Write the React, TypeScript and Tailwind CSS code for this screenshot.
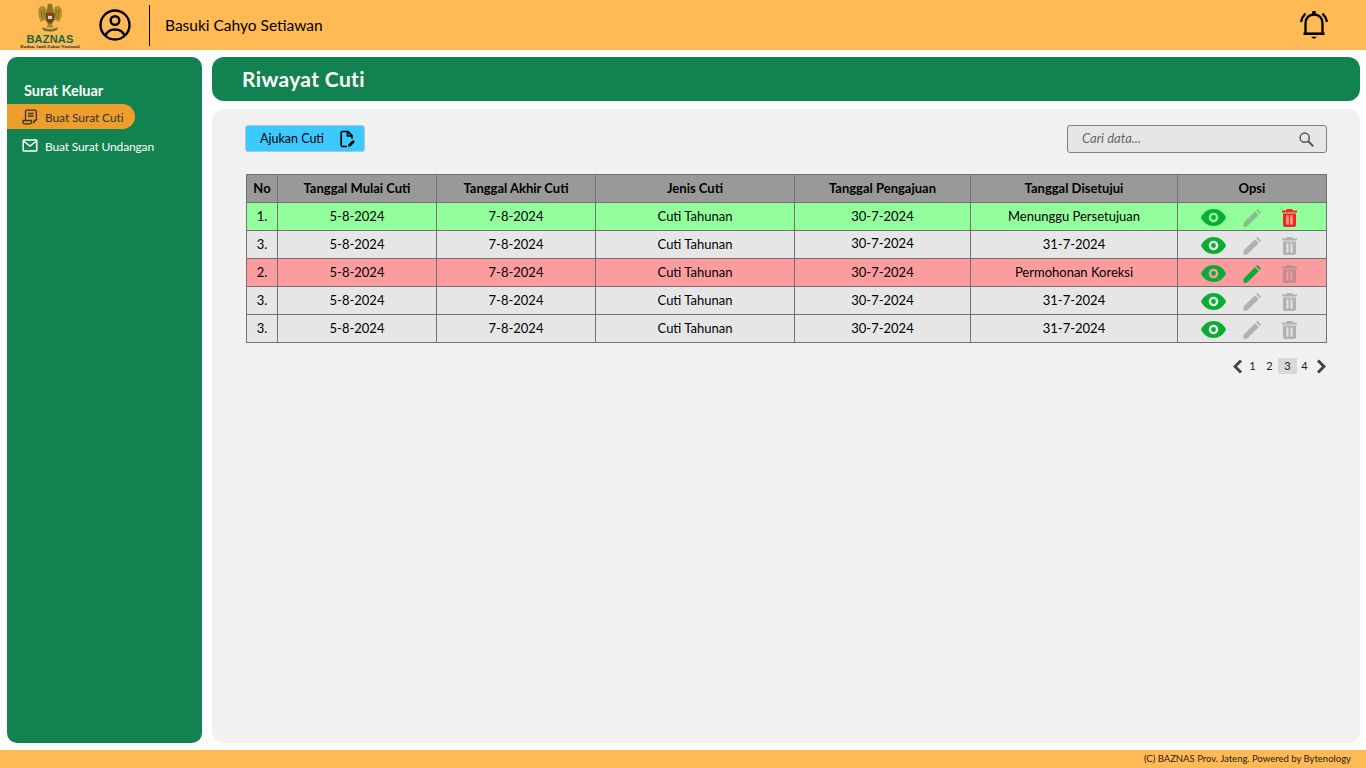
const rows = [
  { no: '1.', tgl: '30-7-2024', status: 'Menunggu Persetujuan', bg: 'bg-[#92ff9c]', eye: 'text-[#92ff9c]', edit: false, del: true },
  { no: '3.', tgl: '30-7-2024', status: '31-7-2024', bg: 'bg-[#e6e6e6]', eye: 'text-[#e6e6e6]', edit: false, del: false },
  { no: '2.', tgl: '30-7-2024', status: 'Permohonan Koreksi', bg: 'bg-[#fb9d9f]', eye: 'text-[#fb9d9f]', edit: true, del: false },
  { no: '3.', tgl: '30-7-2024', status: '31-7-2024', bg: 'bg-[#e6e6e6]', eye: 'text-[#e6e6e6]', edit: false, del: false },
  { no: '3.', tgl: '30-7-2024', status: '31-7-2024', bg: 'bg-[#e6e6e6]', eye: 'text-[#e6e6e6]', edit: false, del: false },
]

const headers = ['No', 'Tanggal Mulai Cuti', 'Tanggal Akhir Cuti', 'Jenis Cuti', 'Tanggal Pengajuan', 'Tanggal Disetujui', 'Opsi']

function Logo() {
  return (
    <div className="w-[62px] flex flex-col items-center">
      <svg viewBox="0 0 26 30" className="w-[26px] h-[30px] mt-[2px]">
        {/* wings */}
        <path d="M9 5C6 2 3 2.500 1.500 6 .5 10 1.500 15 4 19l4.500-2.500z" fill="#b0902c" />
        <path d="M17 5c3-3 6-2.500 7.500 1 1 4 0 9-2.500 13l-4.500-2.500z" fill="#b0902c" />
        <path d="M4 7c0 3 .5 6 2 9M7 6c-.5 3 0 6 1 8M22 7c0 3-.5 6-2 9M19 6c.5 3 0 6-1 8" stroke="#6e5a1c" strokeWidth="0.800" fill="none" />
        {/* head and body */}
        <path d="M13 .5c-1.800 0-3 1.500-2.500 3.500L9 9v9l2 3h4l2-3V9l-1.500-5C16 2 14.800 .5 13 .5z" fill="#8f7420" />
        {/* shield */}
        <path d="M8.500 10h9v7l-4.500 3.500L8.500 17z" fill="#6b4a22" />
        <rect x="11" y="11" width="4" height="5" fill="#d8d2c0" />
        <rect x="11" y="11" width="4" height="2" fill="#b53226" />
        {/* tail and banner */}
        <path d="M11 21h4l1.500 3.500h-7z" fill="#a8882a" />
        <path d="M5 24c3 1.500 5 2 8 2s5-.5 8-2l-1 3c-2 1-4.500 1.500-7 1.500S8 28 6 27z" fill="#7d6d2e" />
      </svg>
      <span className="mt-[1px] text-[11px] leading-[10px] font-black tracking-[0.2px] text-[#14693f] font-['Liberation_Sans',sans-serif]">BAZNAS</span>
      <span className="text-[5px] leading-[6px] font-bold whitespace-nowrap text-[#333] font-['Liberation_Serif',serif]">Badan Amil Zakat Nasional</span>
    </div>
  )
}

function UserIcon() {
  return (
    <svg viewBox="0 0 32 32" className="w-[32px] h-[32px]" fill="none" stroke="black" strokeWidth="2.400">
      <circle cx="16" cy="16" r="14.500" />
      <circle cx="16" cy="11.500" r="4.300" />
      <path d="M6.500 26.500c1.500-4 5-6 9.500-6s8 2 9.500 6" />
    </svg>
  )
}

function BellIcon() {
  return (
    <svg viewBox="0 0 28 28" className="w-[28px] h-[28px]" fill="none" stroke="black" strokeWidth="2.300">
      <path d="M5.500 22V12C5.500 7 9 3.500 14 3.500S22.500 7 22.500 12V22" />
      <path d="M3.500 22.700h21" strokeWidth="2.600" />
      <path d="M14 0v4" strokeWidth="3.500" />
      <path d="M11 25.700h6L14 28z" fill="black" stroke="none" />
      <path d="M5.500 2.500C3 5 1.500 8 1 11" />
      <path d="M22.500 2.500C25 5 26.500 8 27 11" />
    </svg>
  )
}

function CutiIcon() {
  return (
    <svg viewBox="0 0 16 16" className="w-[16px] h-[16px] text-[#333]" fill="none" stroke="currentColor" strokeWidth="1.300">
      <path d="M3.500 11V2.500C3.500 1.700 4 1.200 4.800 1.200h8.200c.8 0 1.300.5 1.300 1.300V9" />
      <path d="M6 4.500h5.500M6 7h5.500" />
      <path d="M1 11.500h8.500v1.500c0 1-.6 1.800-1.500 1.800H2.500C1.600 14.800 1 14 1 13z" />
      <path d="M10.500 14.500l.5-2 3.500-3.500 1.200 1.200-3.500 3.500z" fill="currentColor" stroke="none" />
    </svg>
  )
}

function MailIcon() {
  return (
    <svg viewBox="0 0 16 13" className="w-[16px] h-[13px]" fill="none" stroke="white" strokeWidth="1.500">
      <rect x="1.200" y="1" width="13.600" height="11" rx="0.800" />
      <path d="M1.500 2l6.500 5 6.500-5" />
    </svg>
  )
}

function AjukanIcon() {
  return (
    <svg viewBox="0 0 18 18" className="w-[18px] h-[18px]" fill="none" stroke="black" strokeWidth="1.700">
      <path d="M9 16.500H4.500c-.8 0-1.300-.5-1.300-1.300V2.800c0-.8.5-1.300 1.300-1.300h5.500l4 4.200v3" strokeLinejoin="round" />
      <path d="M9.500 1.500v4.500h4.500" />
      <path d="M10 16.800l.6-2.500 4.400-4.400 2 2-4.400 4.400z" fill="black" stroke="none" />
    </svg>
  )
}

function SearchIcon() {
  return (
    <svg viewBox="0 0 15 15" className="w-[15px] h-[15px]" fill="none" stroke="#555">
      <circle cx="5.700" cy="5.700" r="4.600" strokeWidth="1.500" />
      <path d="M9 9l5.200 5.200" strokeWidth="2" />
    </svg>
  )
}

function EyeIcon() {
  return (
    <svg viewBox="0 0 25 17" className="w-[25px] h-[17px]">
      <path d="M0 8.500C2.500 3.200 7 0 12.500 0S22.500 3.200 25 8.500C22.500 13.800 18 17 12.500 17S2.500 13.800 0 8.500z" fill="#08ad36" />
      <circle cx="12.500" cy="8.500" r="3.600" fill="none" stroke="currentColor" strokeWidth="2.400" />
    </svg>
  )
}

function PencilIcon({ active }: { active: boolean }) {
  return (
    <svg viewBox="0 0 18 18" className={active ? 'w-[18px] h-[18px] text-[#08ad36]' : 'w-[18px] h-[18px] text-[#808080] opacity-50'} fill="currentColor">
      <path d="M0.300 17.700l.4-4.200L12 2.200l3.800 3.800L4.500 17.300q-.4.400-1 .4z" />
      <path d="M13 1.200l1-1q.4-.3.800 0l3 3q.3.400 0 .8l-1 1z" />
    </svg>
  )
}

function TrashIcon({ active }: { active: boolean }) {
  return (
    <svg viewBox="0 0 15 18" className={active ? 'w-[15px] h-[18px] text-[#ff1f1f]' : 'w-[15px] h-[18px] text-[#808080] opacity-50'}>
      <path d="M5 0h5l1 1.500h4v2H0v-2h4z" fill="currentColor" />
      <path fillRule="evenodd" d="M1 4.500h13V16c0 1.200-.8 2-2 2H3c-1.200 0-2-.8-2-2zM4.500 6.500v9h2v-9zM8.500 6.500v9h2v-9z" fill="currentColor" />
      {active && <path d="M4.500 6.500h2v9h-2zM8.500 6.500h2v9h-2z" fill="#ff9a8a" />}
    </svg>
  )
}

function PageChevron({ right }: { right?: boolean }) {
  return (
    <svg viewBox="0 0 10 15" className="w-[10px] h-[15px]" fill="none" stroke="#444" strokeWidth="3">
      <path d={right ? 'M2 1.500l6 6-6 6' : 'M8 1.500l-6 6 6 6'} />
    </svg>
  )
}

export default function App() {
  return (
    <div className="w-[1366px] h-[768px] bg-white flex flex-col overflow-hidden text-black font-['Lato',sans-serif]">
      <header className="h-[50px] shrink-0 bg-[#ffb955] flex items-center pl-[19px] pr-[38px]">
        <Logo />
        <div className="ml-[18px]"><UserIcon /></div>
        <div className="ml-[18px] w-px h-[41px] bg-black" />
        <span className="ml-[15px] pt-[2px] text-[15.500px]">Basuki Cahyo Setiawan</span>
        <div className="ml-auto"><BellIcon /></div>
      </header>

      <div className="flex-1 min-h-0 flex gap-[10px] pl-[7px] pr-[6px] pt-[7px] pb-[7px]">
        <aside className="w-[195px] bg-[#118250] rounded-[10px] pt-[25px] text-white">
          <div className="pl-[17px] text-[14.500px] font-bold leading-[17px]">Surat Keluar</div>
          <div className="mt-[5px] w-[128px] h-[25px] bg-[#ee9f2b] rounded-r-full flex items-center pl-[15px] gap-[7px] text-[#333]">
            <CutiIcon />
            <span className="text-[12px] pt-[2px] tracking-[-0.1px]">Buat Surat Cuti</span>
          </div>
          <div className="mt-[4px] h-[25px] flex items-center pl-[15px] gap-[7px]">
            <MailIcon />
            <span className="text-[12px] pt-[2px] tracking-[-0.15px]">Buat Surat Undangan</span>
          </div>
        </aside>

        <main className="flex-1 min-w-0 flex flex-col gap-[8px]">
          <div className="h-[44px] shrink-0 bg-[#118250] rounded-[12px] flex items-center pl-[30px] pb-[1px] text-white text-[21px] font-bold tracking-[0.35px]">
            Riwayat Cuti
          </div>

          <section className="flex-1 min-h-0 bg-[#f1f1f1] rounded-[12px] pt-[16px] pl-[33px] pr-[33px]">
            <div className="flex items-start justify-between">
              <button className="w-[120px] h-[27px] bg-[#3bc9ff] border border-[#a9c9d8] rounded-[3px] flex items-center pl-[14px] text-[12.500px] text-black">
                <span className="pt-[2px]">Ajukan Cuti</span>
                <span className="ml-auto mr-[8px]"><AjukanIcon /></span>
              </button>
              <div className="w-[260px] h-[28px] bg-[#e6e6e6] border border-[#808080] rounded-[3px] flex items-center pl-[14px] pr-[12px]">
                <span className="text-[13px] italic text-[#666]">Cari data...</span>
                <span className="ml-auto"><SearchIcon /></span>
              </div>
            </div>

            <table className="mt-[21px] ml-[1px] w-[1080px] table-fixed border-collapse text-[13px] text-center">
              <colgroup>
                <col className="w-[31px]" />
                <col className="w-[159px]" />
                <col className="w-[159px]" />
                <col className="w-[199px]" />
                <col className="w-[176px]" />
                <col className="w-[207px]" />
                <col className="w-[149px]" />
              </colgroup>
              <thead>
                <tr className="h-[28px] bg-[#999999]">
                  {headers.map((h) => (
                    <th key={h} className="border border-[#737373] font-bold p-0">{h}</th>
                  ))}
                </tr>
              </thead>
              <tbody>
                {rows.map((r, i) => (
                  <tr key={i} className={`h-[28px] ${r.bg}`}>
                    <td className="border border-[#737373] p-0">{r.no}</td>
                    <td className="border border-[#737373] p-0">5-8-2024</td>
                    <td className="border border-[#737373] p-0">7-8-2024</td>
                    <td className="border border-[#737373] p-0">Cuti Tahunan</td>
                    <td className={i === 1 ? 'border border-[#737373] p-0 pb-[2px]' : 'border border-[#737373] p-0'}>{r.tgl}</td>
                    <td className="border border-[#737373] p-0">{r.status}</td>
                    <td className="border border-[#737373] p-0">
                      <div className="flex items-center pl-[23px] pt-[2px]">
                        <span className={r.eye}><EyeIcon /></span>
                        <span className="ml-[17px]"><PencilIcon active={r.edit} /></span>
                        <span className="ml-[21px]"><TrashIcon active={r.del} /></span>
                      </div>
                    </td>
                  </tr>
                ))}
              </tbody>
            </table>

            <div className="mt-[15px] w-[1081px] h-[16px] flex items-center justify-end text-[11px] text-[#222]">
              <PageChevron />
              <span className="ml-[1px] w-[17px] text-center">1</span>
              <span className="w-[17px] text-center">2</span>
              <span className="w-[19px] h-[16px] bg-[#d9d9d9] flex items-center justify-center">3</span>
              <span className="w-[15px] text-center">4</span>
              <span className="ml-[4px]"><PageChevron right /></span>
            </div>
          </section>
        </main>
      </div>

      <footer className="h-[18px] shrink-0 bg-[#ffb955] flex items-center justify-end pr-[15px] text-[9.500px] text-[#222]">
        (C) BAZNAS Prov. Jateng. Powered by Bytenology
      </footer>
    </div>
  )
}
